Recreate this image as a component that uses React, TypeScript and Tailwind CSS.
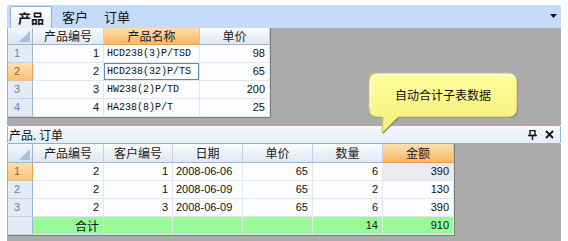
import React from "react";

const cjk = { fontFamily: '"Noto Sans CJK SC", "Noto Sans", sans-serif' };
const num = { fontFamily: '"Liberation Sans", Arial, sans-serif' };
const mono = { fontFamily: '"Liberation Mono", "DejaVu Sans Mono", monospace' };

function Corner() {
  return (
    <div className="w-[25px] h-full shrink-0 border-r border-b border-[#9eb6ce] bg-gradient-to-b from-[#f4f7fc] to-[#d9e4f2] relative">
      <svg className="absolute right-[2px] bottom-[2px]" width="11" height="11" viewBox="0 0 11 11">
        <polygon points="11,0 11,11 0,11" fill="#aabfd9" />
      </svg>
    </div>
  );
}

function HeaderCell({ w, label, active }: { w: number; label: string; active?: boolean }) {
  return (
    <div
      style={{ width: w, ...cjk }}
      className={
        "shrink-0 h-full flex items-center justify-center text-[12px] leading-none border-r border-b " +
        (active
          ? "bg-gradient-to-b from-[#fde0b0] to-[#f8b664] border-r-[#e0c090] border-b-[#e8a050] text-[#1a1a1a]"
          : "bg-gradient-to-b from-[#fafcfe] to-[#dfe7f2] border-r-[#c5d2e2] border-b-[#9eb6ce] text-[#1a1a1a]")
      }
    >
      {label}
    </div>
  );
}

function RowHeader({ n, active }: { n: string; active?: boolean }) {
  return (
    <div
      style={num}
      className={
        "w-[25px] shrink-0 h-full flex items-center pl-[6px] text-[11px] border-r border-b " +
        (active
          ? "bg-gradient-to-b from-[#fde0b0] to-[#f9c27c] border-r-[#e8a050] border-b-[#e8c090] text-[#8a6a3a]"
          : "bg-[#e3ebf6] border-r-[#9eb6ce] border-b-[#c5d2e2] text-[#6a82a8]")
      }
    >
      {n}
    </div>
  );
}

type Cell = { w: number; text: string; align?: "l" | "r"; font?: "mono" | "num" | "cjk"; bg?: string; focus?: boolean };

function DataCell({ c }: { c: Cell }) {
  const f = c.font === "mono" ? mono : c.font === "cjk" ? cjk : num;
  return (
    <div
      style={{ width: c.w, ...f }}
      className={
        "shrink-0 h-full flex items-center border-r border-b border-[#e2e7ee] text-[11px] text-[#111] relative " +
        (c.align === "l" ? "justify-start pl-[3px] " : "justify-end pr-[4px] ") +
        (c.bg ?? "bg-[#fcfdfe]")
      }
    >
      {c.focus && <div className="absolute left-0 top-0 right-0 bottom-0 border border-[#5a8ac6]" />}
      <span className={c.font === "mono" ? "text-[10px]" : c.font === "cjk" ? "text-[12px]" : ""}>{c.text}</span>
    </div>
  );
}

export default function App() {
  const topCols = [71, 96, 70];
  const topRows: Cell[][] = [
    [
      { w: 71, text: "1" },
      { w: 96, text: "HCD238(3)P/TSD", align: "l", font: "mono" },
      { w: 70, text: "98" },
    ],
    [
      { w: 71, text: "2" },
      { w: 96, text: "HCD238(32)P/TS", align: "l", font: "mono", focus: true },
      { w: 70, text: "65" },
    ],
    [
      { w: 71, text: "3" },
      { w: 96, text: "HW238(2)P/TD", align: "l", font: "mono" },
      { w: 70, text: "200" },
    ],
    [
      { w: 71, text: "4" },
      { w: 96, text: "HA238(8)P/T", align: "l", font: "mono" },
      { w: 70, text: "25" },
    ],
  ];
  const bw = [71, 69, 70, 70, 70, 71];
  const bottomRows: string[][] = [
    ["2", "1", "2008-06-06", "65", "6", "390"],
    ["2", "1", "2008-06-09", "65", "2", "130"],
    ["2", "3", "2008-06-09", "65", "6", "390"],
  ];
  const bottomHeaders = ["产品编号", "客户编号", "日期", "单价", "数量", "金额"];

  return (
    <div className="w-[568px] h-[241px] bg-white relative overflow-hidden">
      <div className="ml-[7px] mt-[5px] w-[554px] h-[236px] flex flex-col">
        {/* Tab bar */}
        <div className="h-[23px] bg-[#c4dcfa] flex items-end pl-[3px] relative shrink-0">
          <div
            style={cjk}
            className="h-[22px] w-[42px] bg-gradient-to-b from-[#ffffff] to-[#e6effb] border border-b-0 border-[#8fb0d8] rounded-t-[2px] flex items-center justify-center text-[13px] font-bold text-[#111]"
          >
            产品
          </div>
          <div style={cjk} className="h-[22px] flex items-center ml-[10px] text-[13px] text-[#111]">
            客户
          </div>
          <div style={cjk} className="h-[22px] flex items-center ml-[16px] text-[13px] text-[#111]">
            订单
          </div>
          <svg className="absolute right-[4px] top-[9px]" width="7" height="4" viewBox="0 0 7 4">
            <polygon points="0,0 7,0 3.5,4" fill="#111" />
          </svg>
        </div>

        {/* Top grid area */}
        <div className="h-[97px] bg-[#ababab] pl-[1px] shrink-0">
          <div className="w-[263px] flex flex-col border-r border-b border-[#7c7c7c]">
            <div className="h-[17px] flex">
              <Corner />
              {topCols.map((w, i) => (
                <HeaderCell key={i} w={w} label={["产品编号", "产品名称", "单价"][i]} active={i === 1} />
              ))}
            </div>
            {topRows.map((r, i) => (
              <div key={i} className="h-[18px] flex">
                <RowHeader n={String(i + 1)} active={i === 1} />
                {r.map((c, j) => (
                  <DataCell key={j} c={c} />
                ))}
              </div>
            ))}
          </div>
        </div>

        {/* Lower panel title */}
        <div className="h-[19px] shrink-0 bg-gradient-to-b from-[#f5f9fe] to-[#e4edf9] border border-[#8fb0d8] rounded-[2px] flex items-center pl-[1px] pr-[6px]">
          <span style={cjk} className="text-[12px] text-[#111] flex-1">
            产品. 订单
          </span>
          <span style={num} className="text-[12px] font-bold text-[#111] mr-[8px] leading-none">
            <svg width="9" height="10" viewBox="0 0 9 10">
              <rect x="2" y="0.5" width="5" height="5" fill="none" stroke="#111" strokeWidth="1.4" />
              <line x1="0" y1="5.5" x2="9" y2="5.5" stroke="#111" strokeWidth="1.4" />
              <line x1="4.5" y1="5.5" x2="4.5" y2="10" stroke="#111" strokeWidth="1.4" />
            </svg>
          </span>
          <svg width="9" height="9" viewBox="0 0 9 9">
            <line x1="1" y1="1" x2="8" y2="8" stroke="#111" strokeWidth="1.8" />
            <line x1="8" y1="1" x2="1" y2="8" stroke="#111" strokeWidth="1.8" />
          </svg>
        </div>

        {/* Bottom grid area */}
        <div className="flex-1 bg-[#ababab] pl-[1px]">
          <div className="w-[447px] flex flex-col border-r border-b border-[#7c7c7c] bg-white">
            <div className="h-[19px] flex">
              <Corner />
              {bw.map((w, i) => (
                <HeaderCell key={i} w={w} label={bottomHeaders[i]} active={i === 5} />
              ))}
            </div>
            {bottomRows.map((r, i) => (
              <div key={i} className="h-[18px] flex">
                <RowHeader n={String(i + 1)} active={i === 0} />
                {r.map((t, j) => (
                  <DataCell
                    key={j}
                    c={{
                      w: bw[j],
                      text: t,
                      align: j === 2 ? "l" : "r",
                      bg: i === 0 && j === 5 ? "bg-[#e9ebf0]" : undefined,
                    }}
                  />
                ))}
              </div>
            ))}
            <div className="h-[18px] flex">
              <RowHeader n="" />
              {bw.map((w, j) => (
                <DataCell
                  key={j}
                  c={{
                    w,
                    text: j === 0 ? "合计" : j === 4 ? "14" : j === 5 ? "910" : "",
                    font: j === 0 ? "cjk" : "num",
                    bg: "bg-[#98fb98]",
                  }}
                />
              ))}
            </div>
          </div>
        </div>
      </div>

      {/* Callout bubble */}
      <div className="absolute left-[366px] top-[71px] w-[154px] h-[64px]">
        <svg width="154" height="64" viewBox="0 0 154 64" className="absolute left-0 top-0">
          <defs>
            <linearGradient id="bub" x1="0" y1="0" x2="0" y2="1">
              <stop offset="0" stopColor="#ffff9c" />
              <stop offset="1" stopColor="#f4ee78" />
            </linearGradient>
          </defs>
          <path
            d="M12 2 H142 Q151 2 151 11 V37 Q151 46 142 46 H32 L16 62 L17 46 H12 Q3 46 3 37 V11 Q3 2 12 2 Z"
            fill="#8a8450"
            transform="translate(1,1)"
          />
          <path
            d="M12 2 H142 Q151 2 151 11 V37 Q151 46 142 46 H32 L16 62 L17 46 H12 Q3 46 3 37 V11 Q3 2 12 2 Z"
            fill="url(#bub)"
            stroke="#c8c070"
            strokeWidth="1"
          />
          <path d="M12 3.5 H142 Q149.5 3.5 149.5 11" fill="none" stroke="#fffff0" strokeWidth="1.2" />
          <path d="M4.5 37 V11 Q4.5 3.5 12 3.5" fill="none" stroke="#fffff0" strokeWidth="1.2" />
        </svg>
        <div
          style={cjk}
          className="absolute left-[3px] top-[2px] w-[148px] h-[44px] flex items-center justify-center text-[12px] text-[#111]"
        >
          自动合计子表数据
        </div>
      </div>
    </div>
  );
}
